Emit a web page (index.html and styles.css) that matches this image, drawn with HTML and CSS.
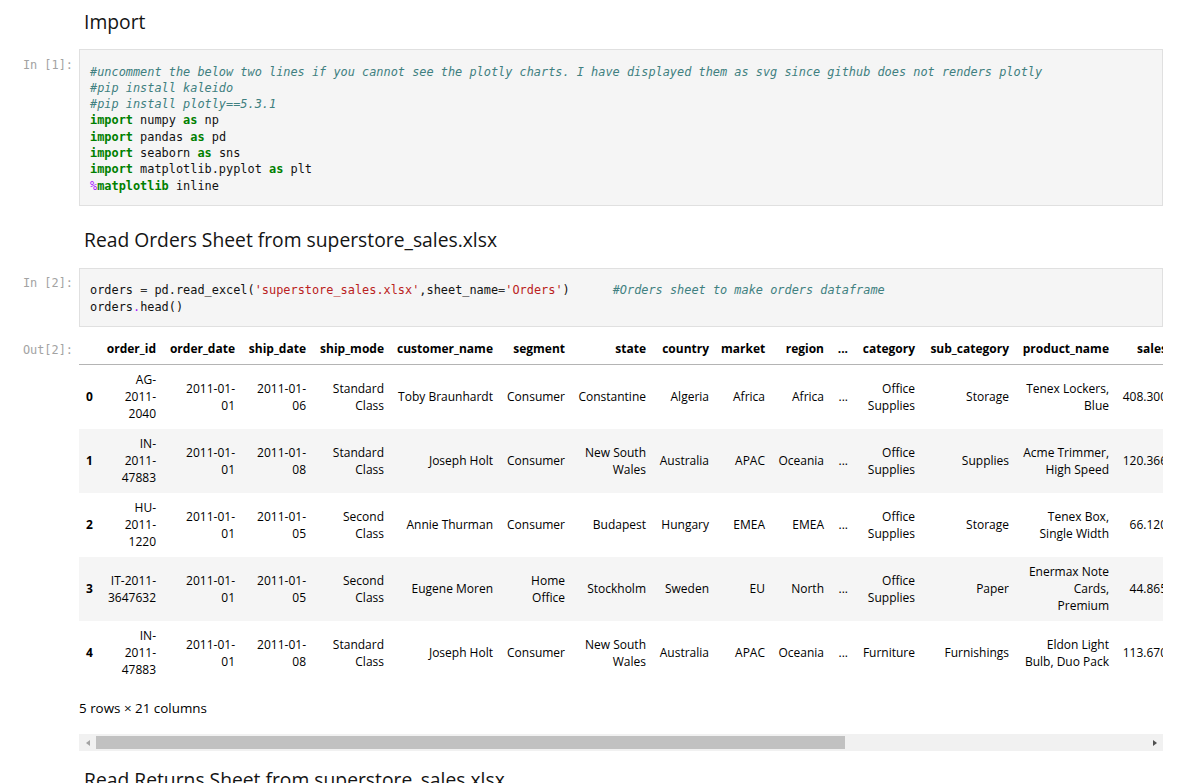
FILE: index.html
```html
<!DOCTYPE html>
<html>
<head>
<meta charset="utf-8">
<title>Notebook</title>
<link rel="stylesheet" href="styles.css">
</head>
<body>
<div class="nb">
  <div class="cell md-first">
    <div class="prompt"></div>
    <div class="body"><h3>Import</h3></div>
  </div>

  <div class="cell code1">
    <div class="prompt in-prompt">In&nbsp;[1]:</div>
    <div class="body"><div class="input"><pre><span class="c">#uncomment the below two lines if you cannot see the plotly charts. I have displayed them as svg since github does not renders plotly</span>
<span class="c">#pip install kaleido</span>
<span class="c">#pip install plotly==5.3.1</span>
<span class="k">import</span> numpy <span class="k">as</span> np
<span class="k">import</span> pandas <span class="k">as</span> pd
<span class="k">import</span> seaborn <span class="k">as</span> sns
<span class="k">import</span> matplotlib.pyplot <span class="k">as</span> plt
<span class="o">%</span><span class="k">matplotlib</span> inline</pre></div></div>
  </div>

  <div class="cell md-second">
    <div class="prompt"></div>
    <div class="body"><h3>Read Orders Sheet from superstore_sales.xlsx</h3></div>
  </div>

  <div class="cell code2">
    <div class="prompt in-prompt">In&nbsp;[2]:</div>
    <div class="body"><div class="input"><pre>orders <span class="eq">=</span> pd.read_excel(<span class="s">'superstore_sales.xlsx'</span>,sheet_name<span class="eq">=</span><span class="s">'Orders'</span>)      <span class="c">#Orders sheet to make orders dataframe</span>
orders<span class="o">.</span>head()</pre></div></div>
  </div>

  <div class="cell out">
    <div class="prompt out-prompt">Out[2]:</div>
    <div class="body">
      <div class="df-wrap">
        <table class="df">
          <colgroup>
            <col class="w-idx"><col class="w-oid"><col class="w-odate"><col class="w-sdate"><col class="w-smode"><col class="w-cust"><col class="w-seg"><col class="w-state"><col class="w-country"><col class="w-market"><col class="w-region"><col class="w-dots"><col class="w-cat"><col class="w-subcat"><col class="w-prod"><col class="w-sales"><col class="w-qty"><col class="w-disc"><col class="w-profit"><col class="w-ship"><col class="w-prio"><col class="w-year">
          </colgroup>
          <thead>
            <tr><th></th><th>order_id</th><th>order_date</th><th>ship_date</th><th>ship_mode</th><th>customer_name</th><th>segment</th><th>state</th><th>country</th><th>market</th><th>region</th><th>...</th><th>category</th><th>sub_category</th><th>product_name</th><th>sales</th><th>quantity</th><th>discount</th><th>profit</th><th>shipping_cost</th><th>order_priority</th><th>year</th></tr>
          </thead>
          <tbody>
            <tr><th>0</th><td>AG-<br>2011-<br>2040</td><td>2011-01-<br>01</td><td>2011-01-<br>06</td><td>Standard<br>Class</td><td>Toby Braunhardt</td><td>Consumer</td><td>Constantine</td><td>Algeria</td><td>Africa</td><td>Africa</td><td>...</td><td>Office<br>Supplies</td><td>Storage</td><td>Tenex Lockers,<br>Blue</td><td>408.300</td><td>2</td><td>0.0</td><td>106.140</td><td>35.46</td><td>Medium</td><td>2011</td></tr>
            <tr><th>1</th><td>IN-<br>2011-<br>47883</td><td>2011-01-<br>01</td><td>2011-01-<br>08</td><td>Standard<br>Class</td><td>Joseph Holt</td><td>Consumer</td><td>New South<br>Wales</td><td>Australia</td><td>APAC</td><td>Oceania</td><td>...</td><td>Office<br>Supplies</td><td>Supplies</td><td>Acme Trimmer,<br>High Speed</td><td>120.366</td><td>3</td><td>0.1</td><td>36.036</td><td>9.72</td><td>Medium</td><td>2011</td></tr>
            <tr><th>2</th><td>HU-<br>2011-<br>1220</td><td>2011-01-<br>01</td><td>2011-01-<br>05</td><td>Second<br>Class</td><td>Annie Thurman</td><td>Consumer</td><td>Budapest</td><td>Hungary</td><td>EMEA</td><td>EMEA</td><td>...</td><td>Office<br>Supplies</td><td>Storage</td><td>Tenex Box,<br>Single Width</td><td>66.120</td><td>4</td><td>0.0</td><td>29.640</td><td>8.17</td><td>High</td><td>2011</td></tr>
            <tr><th>3</th><td>IT-2011-<br>3647632</td><td>2011-01-<br>01</td><td>2011-01-<br>05</td><td>Second<br>Class</td><td>Eugene Moren</td><td>Home<br>Office</td><td>Stockholm</td><td>Sweden</td><td>EU</td><td>North</td><td>...</td><td>Office<br>Supplies</td><td>Paper</td><td>Enermax Note<br>Cards,<br>Premium</td><td>44.865</td><td>3</td><td>0.5</td><td>-26.055</td><td>4.82</td><td>High</td><td>2011</td></tr>
            <tr><th>4</th><td>IN-<br>2011-<br>47883</td><td>2011-01-<br>01</td><td>2011-01-<br>08</td><td>Standard<br>Class</td><td>Joseph Holt</td><td>Consumer</td><td>New South<br>Wales</td><td>Australia</td><td>APAC</td><td>Oceania</td><td>...</td><td>Furniture</td><td>Furnishings</td><td>Eldon Light<br>Bulb, Duo Pack</td><td>113.670</td><td>5</td><td>0.1</td><td>37.770</td><td>4.70</td><td>Medium</td><td>2011</td></tr>
          </tbody>
        </table>
      </div>
      <p class="shape">5 rows × 21 columns</p>
      <div class="hscroll">
        <div class="sb-btn sb-left"></div>
        <div class="sb-thumb"></div>
        <div class="sb-fill"></div>
        <div class="sb-btn sb-right"></div>
      </div>
    </div>
  </div>

  <div class="cell md-third">
    <div class="prompt"></div>
    <div class="body"><h3>Read Returns Sheet from superstore_sales.xlsx</h3></div>
  </div>
</div>
</body>
</html>
```

FILE: styles.css
```css
html {
  overflow: hidden;
}
body {
  margin: 0;
  background: #ffffff;
  font-family: "Open Sans", "Noto Sans", sans-serif;
  color: #000000;
}
.nb {
  width: 1163px;
}
.cell {
  display: flex;
  align-items: flex-start;
}
.prompt {
  flex: 0 0 79px;
  box-sizing: border-box;
  padding-right: 6px;
  text-align: right;
  font-family: "DejaVu Sans Mono", "Liberation Mono", monospace;
  font-size: 11.9px;
  line-height: 16.3px;
  color: #a3a3a3;
  white-space: nowrap;
}
.in-prompt {
  padding-top: 7.5px;
}
.out-prompt {
  padding-top: 8px;
}
.body {
  flex: 1;
  min-width: 0;
}
h3 {
  margin: 0;
  padding-left: 5px;
  font-size: 19.3px;
  line-height: 24px;
  font-weight: 500;
  color: #141414;
}
.md-first { margin-top: 10px; }
.code1 { margin-top: 15px; }
.md-second { margin-top: 21.5px; }
.code2 { margin-top: 16px; }
.out { margin-top: 6.5px; }
.md-third { margin-top: 17px; }

.input {
  background: #f5f5f5;
  border: 1px solid #e0e0e0;
  padding: 13.5px 10px 11.5px;
}
.input pre {
  margin: 0;
  font-family: "DejaVu Sans Mono", "Liberation Mono", monospace;
  font-size: 11.9px;
  line-height: 16.3px;
  color: #111111;
  white-space: pre;
}
.c { color: #408080; font-style: italic; }
.k { color: #008000; font-weight: bold; }
.o { color: #aa22ff; }
.s { color: #ba2121; }
.eq { color: #333333; }

.df-wrap {
  overflow: hidden;
  width: 100%;
}
.df {
  table-layout: fixed;
  width: 1512px;
  border-collapse: collapse;
  border-spacing: 0;
  font-size: 12px;
  line-height: 17px;
}
.df th,
.df td {
  padding: 6.5px 6px;
  text-align: right;
  vertical-align: middle;
  white-space: nowrap;
  border: none;
}
.df th {
  font-weight: 700;
}
.df tbody th {
  text-align: left;
  padding-left: 7px;
  padding-right: 0;
}
.df thead tr {
  border-bottom: 1px solid #b4b4b4;
}
.df tbody tr:nth-child(even) {
  background: #f5f5f5;
}
.w-idx { width: 21px; }
.w-oid { width: 62px; }
.w-odate { width: 79px; }
.w-sdate { width: 71px; }
.w-smode { width: 78px; }
.w-cust { width: 109px; }
.w-seg { width: 72px; }
.w-state { width: 81px; }
.w-country { width: 63px; }
.w-market { width: 56px; }
.w-region { width: 59px; }
.w-dots { width: 24px; }
.w-cat { width: 67px; }
.w-subcat { width: 94px; }
.w-prod { width: 100px; }
.w-sales { width: 58px; }
.w-qty { width: 62px; }
.w-disc { width: 62px; }
.w-profit { width: 56px; }
.w-ship { width: 96px; }
.w-prio { width: 100px; }
.w-year { width: 42px; }

.shape {
  margin: 15px 0 0;
  font-size: 13.4px;
  line-height: 17px;
  color: #000000;
}
.hscroll {
  margin-top: 17.5px;
  height: 17px;
  background: #f1f1f1;
  display: flex;
  align-items: center;
}
.sb-btn {
  flex: 0 0 17px;
  height: 17px;
  display: flex;
  align-items: center;
  justify-content: center;
}
.sb-left::before {
  content: "";
  width: 0;
  height: 0;
  border-style: solid;
  border-width: 3.5px 4px 3.5px 0;
  border-color: transparent #a3a3a3 transparent transparent;
}
.sb-right::before {
  content: "";
  width: 0;
  height: 0;
  border-style: solid;
  border-width: 3.5px 0 3.5px 4px;
  border-color: transparent transparent transparent #505050;
}
.sb-thumb {
  flex: 0 0 749px;
  height: 13px;
  background: #c1c1c1;
}
.sb-fill {
  flex: 1;
}
```
